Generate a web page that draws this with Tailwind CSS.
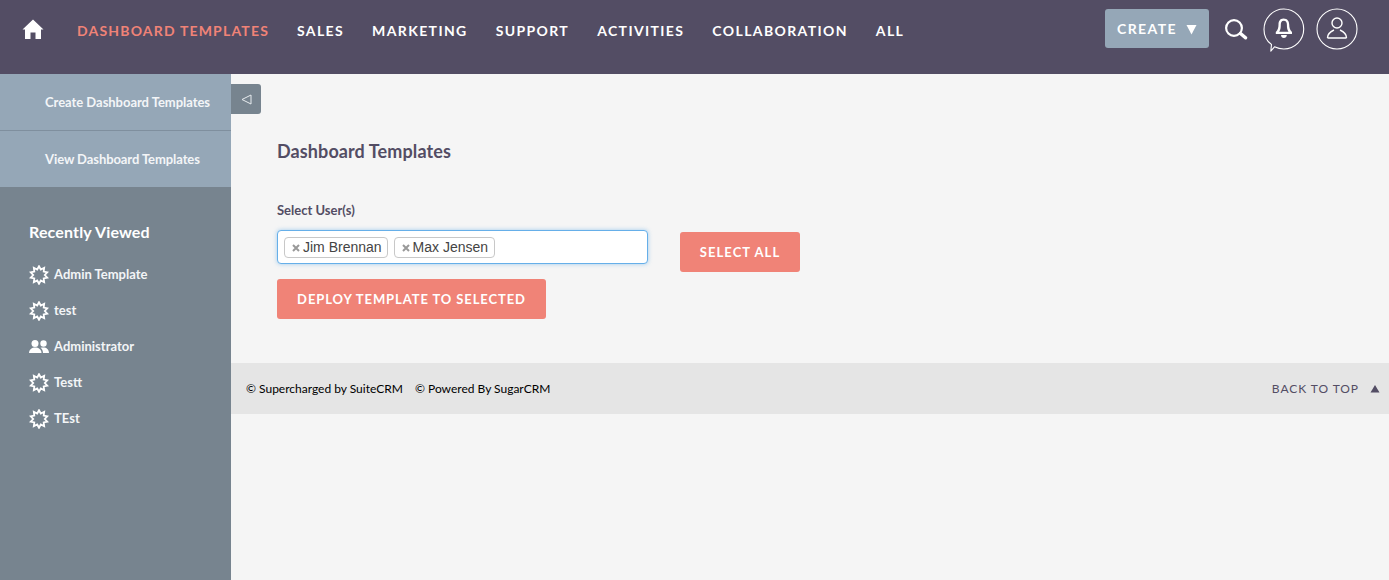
<!DOCTYPE html>
<html>
<head>
<meta charset="utf-8">
<script src="https://cdn.jsdelivr.net/npm/@tailwindcss/browser@4"></script>
</head>
<body class="font-['Lato',sans-serif] bg-[#f5f5f5] overflow-hidden">
<div class="w-[1389px] h-[580px] flex flex-col">
  <header class="h-[74px] shrink-0 bg-[#534d64] flex items-start relative">
    <div class="w-[77px] h-[60px] pl-[22px] pt-[19px] shrink-0">
      <svg width="22" height="21" viewBox="0 0 22 21" fill="#fff"><path d="M11 0.5 L21.5 10.5 L19 10.5 L19 20 L13.5 20 L13.5 13.5 L8.5 13.5 L8.5 20 L3 20 L3 10.5 L0.5 10.5 Z"/></svg>
    </div>
    <nav class="flex gap-[28px] pt-[22px] text-[14px] leading-[18px] font-bold tracking-[1.38px] text-white whitespace-nowrap">
      <span class="text-[#f08377] tracking-[1.18px]">DASHBOARD TEMPLATES</span>
      <span>SALES</span>
      <span>MARKETING</span>
      <span>SUPPORT</span>
      <span>ACTIVITIES</span>
      <span>COLLABORATION</span>
      <span>ALL</span>
    </nav>
    <div class="ml-auto flex items-start pr-[31px] pt-[8px]">
      <div class="mt-[1px] w-[104px] h-[39px] bg-[#95a7b7] rounded-[3px] flex items-center pl-[12px] text-white text-[14px] font-bold tracking-[1.4px]">
        <span class="-mt-[1px]">CREATE</span>
        <svg class="ml-[9px] mt-[1px]" width="11" height="11" viewBox="0 0 11 11" fill="#fff"><path d="M0.5 1 H10.5 L5.5 10.5 Z"/></svg>
      </div>
      <svg class="ml-[15px] mt-[10px]" width="24" height="22" viewBox="0 0 24 22" fill="none" stroke="#fff"><circle cx="10" cy="10" r="7.9" stroke-width="2.2"/><path d="M16.5 15.5 L21.5 19.8" stroke-width="3.4" stroke-linecap="round"/></svg>
      <svg class="ml-[15px]" width="42" height="44" viewBox="0 0 42 44" fill="none" stroke="#fff">
        <path d="M8.5 36.5 C3.5 33 1 27.5 1 21.5 C1 10.5 9.8 1 20.8 1 C31.8 1 40.7 10 40.7 21 C40.7 32 31.8 41 20.8 41 C17 41 14.5 40.3 11.5 38.8 L7.8 43.2 Z" stroke-width="1.1" stroke-linejoin="round"/>
        <path fill="#fff" stroke="none" d="M20.5 10.5 C16.8 10.5 15.5 13.5 15.5 16.5 C15.5 20 14.8 22 12.8 24 L12.8 26 L29 26 L29 24 C27 22 26.2 20 26.2 16.5 C26.2 13.5 24.5 10.5 20.5 10.5 Z M20.8 12.7 C18.4 12.7 17.8 14.8 17.8 16.8 C17.8 20 17.5 22 16.2 23.8 L25.5 23.8 C24.2 22 23.9 20 23.9 16.8 C23.9 14.8 23.2 12.7 20.8 12.7 Z" fill-rule="evenodd"/>
        <path fill="#fff" stroke="none" d="M18 27 H23.8 C23.8 29 22.5 30 20.9 30 C19.3 30 18 29 18 27 Z"/>
      </svg>
      <svg class="ml-[11px]" width="42" height="42" viewBox="0 0 42 42" fill="none" stroke="#fff"><circle cx="21" cy="21" r="20" stroke-width="1.1"/><circle cx="21" cy="15" r="5" stroke-width="1.4"/><path d="M11.5 30 C11.5 26 14.5 23.5 18 22 M24 22 C27.5 23.5 30.5 26 30.5 30 M11.5 30 H30.5" stroke-width="1.4" stroke-linejoin="round"/></svg>
    </div>
  </header>
  <div class="flex flex-1 min-h-0">
    <aside class="w-[231px] shrink-0 bg-[#77848f] text-white">
      <div class="h-[57px] bg-[#95a7b7] border-b border-[#7f8f9e] pl-[45px] pt-[2px] flex items-center text-[13px] font-bold text-[#f3f5f7] tracking-[-0.03px]">Create Dashboard Templates</div>
      <div class="h-[56px] bg-[#95a7b7] pl-[45px] pt-[2px] flex items-center text-[13px] font-bold text-[#f3f5f7] tracking-[-0.08px]">View Dashboard Templates</div>
      <div class="pl-[29px] pt-[34px]">
        <div class="text-[16px] leading-[22px] font-bold tracking-[0.15px]">Recently Viewed</div>
        <ul class="mt-[14px] flex flex-col text-[13px] font-bold text-[#f3f5f7]">
          <li class="h-[36px] flex items-center gap-[5px]"><svg width="20" height="20" viewBox="0 0 20 20" fill="none" stroke="#fff" stroke-width="1.8"><path d="M10 1.2 L11.79 4.48 L15.17 2.88 L14.69 6.59 L18.37 7.28 L15.8 10 L18.37 12.72 L14.69 13.41 L15.17 17.12 L11.79 15.52 L10 18.8 L8.21 15.52 L4.83 17.12 L5.31 13.41 L1.63 12.72 L4.2 10 L1.63 7.28 L5.31 6.59 L4.83 2.88 L8.21 4.48 Z"/></svg>Admin Template</li>
          <li class="h-[36px] flex items-center gap-[5px]"><svg width="20" height="20" viewBox="0 0 20 20" fill="none" stroke="#fff" stroke-width="1.8"><path d="M10 1.2 L11.79 4.48 L15.17 2.88 L14.69 6.59 L18.37 7.28 L15.8 10 L18.37 12.72 L14.69 13.41 L15.17 17.12 L11.79 15.52 L10 18.8 L8.21 15.52 L4.83 17.12 L5.31 13.41 L1.63 12.72 L4.2 10 L1.63 7.28 L5.31 6.59 L4.83 2.88 L8.21 4.48 Z"/></svg>test</li>
          <li class="h-[36px] flex items-center gap-[5px]"><svg width="20" height="20" viewBox="0 0 20 20" fill="#fff"><circle cx="6" cy="6.5" r="3.5"/><circle cx="14.5" cy="6.5" r="3.2"/><path d="M0 16 C0 12.5 3 10.5 6.2 10.5 C9.5 10.5 12.5 12.5 12.5 16 Z"/><path d="M11.5 10.8 C12.5 10.5 13.5 10.4 14.5 10.4 C17.5 10.4 20 12.3 20 16 L14 16 C14 13.8 13.2 12 11.5 10.8 Z"/></svg>Administrator</li>
          <li class="h-[36px] flex items-center gap-[5px]"><svg width="20" height="20" viewBox="0 0 20 20" fill="none" stroke="#fff" stroke-width="1.8"><path d="M10 1.2 L11.79 4.48 L15.17 2.88 L14.69 6.59 L18.37 7.28 L15.8 10 L18.37 12.72 L14.69 13.41 L15.17 17.12 L11.79 15.52 L10 18.8 L8.21 15.52 L4.83 17.12 L5.31 13.41 L1.63 12.72 L4.2 10 L1.63 7.28 L5.31 6.59 L4.83 2.88 L8.21 4.48 Z"/></svg>Testt</li>
          <li class="h-[36px] flex items-center gap-[5px]"><svg width="20" height="20" viewBox="0 0 20 20" fill="none" stroke="#fff" stroke-width="1.8"><path d="M10 1.2 L11.79 4.48 L15.17 2.88 L14.69 6.59 L18.37 7.28 L15.8 10 L18.37 12.72 L14.69 13.41 L15.17 17.12 L11.79 15.52 L10 18.8 L8.21 15.52 L4.83 17.12 L5.31 13.41 L1.63 12.72 L4.2 10 L1.63 7.28 L5.31 6.59 L4.83 2.88 L8.21 4.48 Z"/></svg>TEst</li>
        </ul>
      </div>
    </aside>
    <main class="flex-1 relative flex flex-col">
      <div class="absolute left-0 top-[10px] w-[30px] h-[30px] bg-[#77848f] rounded-r-[3px] flex items-center justify-center">
        <svg width="11" height="11" viewBox="0 0 11 11" fill="none" stroke="#e8ecef" stroke-width="1"><path d="M10 1 V10 L1 5.5 Z"/></svg>
      </div>
      <div class="h-[289px] pl-[46px] pt-[65px] shrink-0">
        <h1 class="text-[18px] leading-[24px] font-bold text-[#534d64] tracking-[0.1px]">Dashboard Templates</h1>
        <label class="block mt-[39px] text-[13px] leading-[16px] font-bold text-[#534d64]">Select User(s)</label>
        <div class="mt-[12px] flex items-start">
          <div class="w-[371px] h-[34px] bg-white border border-[#66afe9] rounded-[4px] shadow-[0_0_4px_rgba(102,175,233,0.6)] flex items-center pl-[6px] gap-[6px] font-['Liberation_Sans',sans-serif] text-[14px] text-[#444]">
            <span class="h-[21px] flex items-center border border-[#c8c8c8] rounded-[4px] pl-[7px] pr-[5px] bg-white"><svg class="mr-[3px] mt-[1px]" width="8" height="8" viewBox="0 0 8 8" stroke="#999" stroke-width="2"><path d="M1 1 L7 7 M7 1 L1 7"/></svg>Jim Brennan</span>
            <span class="h-[21px] flex items-center border border-[#c8c8c8] rounded-[4px] pl-[7px] pr-[6px] bg-white"><svg class="mr-[3px] mt-[1px]" width="8" height="8" viewBox="0 0 8 8" stroke="#999" stroke-width="2"><path d="M1 1 L7 7 M7 1 L1 7"/></svg>Max Jensen</span>
          </div>
          <button class="ml-[32px] mt-[2px] w-[120px] h-[40px] pt-[1px] bg-[#f08377] rounded-[3px] text-white text-[13px] font-bold tracking-[1.05px]">SELECT ALL</button>
        </div>
        <button class="mt-[7px] block w-[269px] h-[40px] pt-[1px] bg-[#f08377] rounded-[3px] text-white text-[13px] font-bold tracking-[0.9px]">DEPLOY TEMPLATE TO SELECTED</button>
      </div>
      <footer class="h-[51px] bg-[#e5e5e5] flex items-center pl-[16px] pr-[9px] text-[12px] shrink-0">
        <span class="text-black -ml-[1px]">© Supercharged by SuiteCRM</span>
        <span class="text-black ml-[12px]">© Powered By SugarCRM</span>
        <span class="ml-auto text-[#534d64] tracking-[0.95px] flex items-center">BACK TO TOP
          <svg class="ml-[11px]" width="10" height="9" viewBox="0 0 10 9" fill="#534d64"><path d="M5 1 L9.5 8.5 H0.5 Z"/></svg>
        </span>
      </footer>
    </main>
  </div>
</div>
</body>
</html>
